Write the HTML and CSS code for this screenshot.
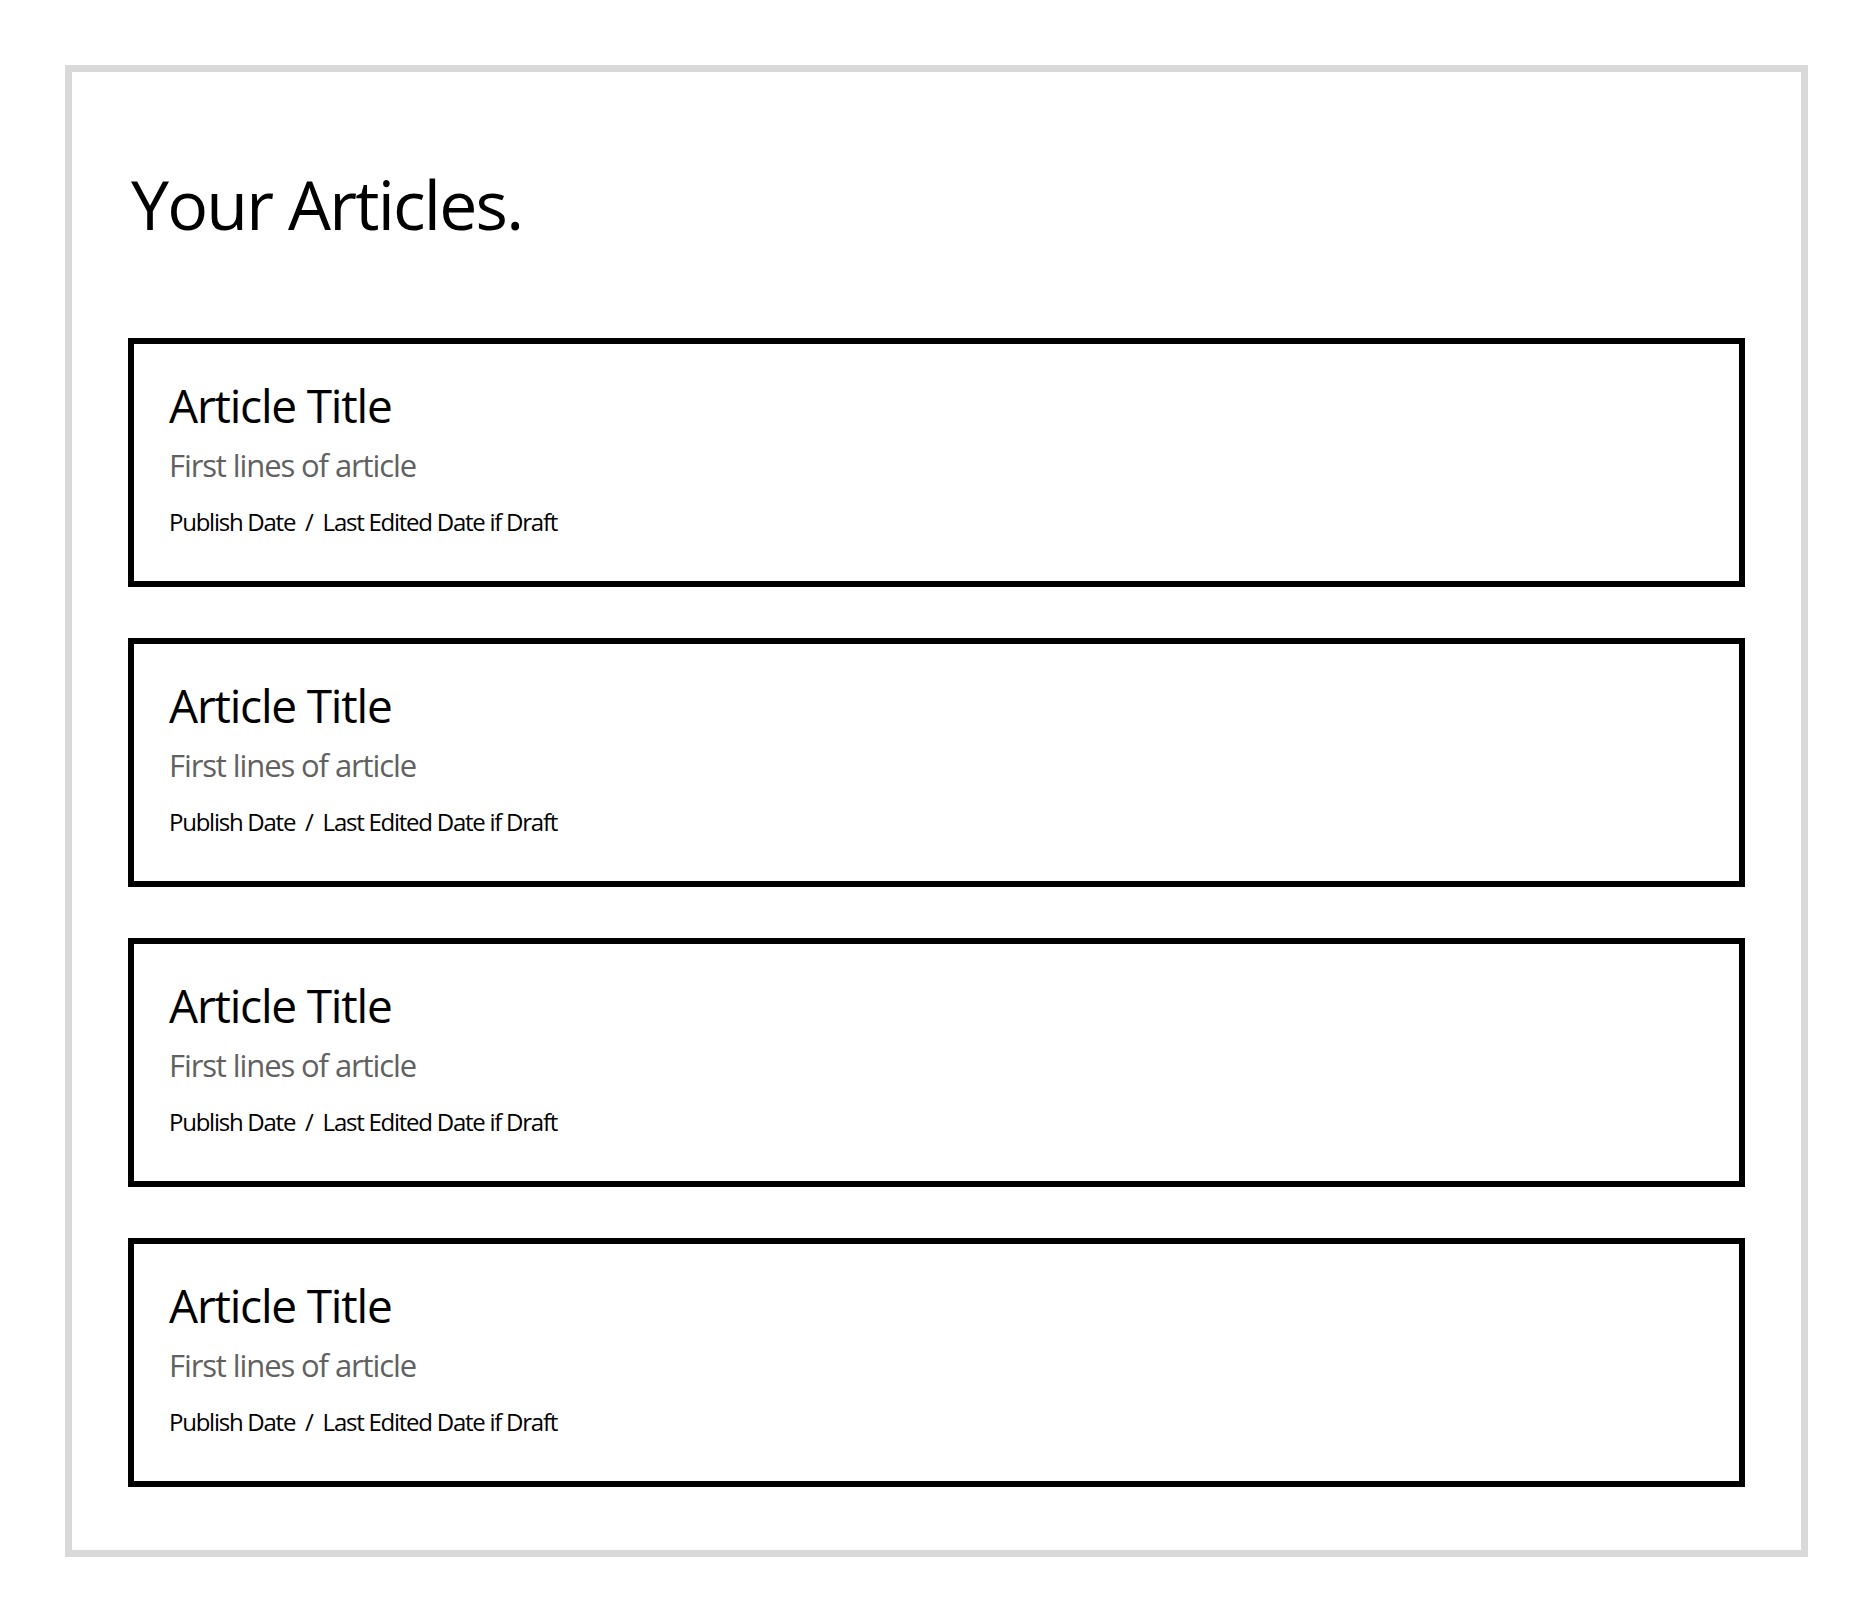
FILE: index.html
```html
<!DOCTYPE html>
<html lang="en">
<head>
<meta charset="utf-8">
<title>Your Articles</title>
<link rel="stylesheet" href="styles.css">
</head>
<body>
<main class="frame">
  <h1 class="heading">Your Articles.</h1>
  <section class="list">
    <article class="card">
      <h2 class="card-title">Article Title</h2>
      <p class="card-excerpt">First lines of article</p>
      <p class="card-meta">Publish Date&nbsp; /&nbsp; Last Edited Date if Draft</p>
    </article>
    <article class="card">
      <h2 class="card-title">Article Title</h2>
      <p class="card-excerpt">First lines of article</p>
      <p class="card-meta">Publish Date&nbsp; /&nbsp; Last Edited Date if Draft</p>
    </article>
    <article class="card">
      <h2 class="card-title">Article Title</h2>
      <p class="card-excerpt">First lines of article</p>
      <p class="card-meta">Publish Date&nbsp; /&nbsp; Last Edited Date if Draft</p>
    </article>
    <article class="card">
      <h2 class="card-title">Article Title</h2>
      <p class="card-excerpt">First lines of article</p>
      <p class="card-meta">Publish Date&nbsp; /&nbsp; Last Edited Date if Draft</p>
    </article>
  </section>
</main>
</body>
</html>
```

FILE: styles.css
```css
html, body {
  margin: 0;
  padding: 0;
  background: #ffffff;
}

body {
  font-family: "Open Sans", "Noto Sans", sans-serif;
  color: #000;
}

.frame {
  box-sizing: border-box;
  margin: 65px 0 0 65px;
  width: 1743px;
  height: 1492px;
  border: 7px solid #d9d9d9;
  padding: 98px 56px 63px;
}

.heading {
  margin: 0 0 100px 3px;
  font-size: 68px;
  line-height: 68px;
  font-weight: 400;
  letter-spacing: -1.8px;
}

.list {
  display: flex;
  flex-direction: column;
  gap: 51px;
}

.card {
  box-sizing: border-box;
  height: 249px;
  border: 6px solid #000;
  padding: 38px 35px 0;
}

.card-title {
  margin: 0;
  font-size: 46px;
  line-height: 46px;
  font-weight: 400;
  letter-spacing: -1.2px;
}

.card-excerpt {
  margin: 22px 0 0;
  font-size: 31px;
  line-height: 31px;
  color: #616161;
  letter-spacing: -1.1px;
}

.card-meta {
  margin: 29px 0 0;
  font-size: 24px;
  line-height: 24px;
  letter-spacing: -1.25px;
}
```
